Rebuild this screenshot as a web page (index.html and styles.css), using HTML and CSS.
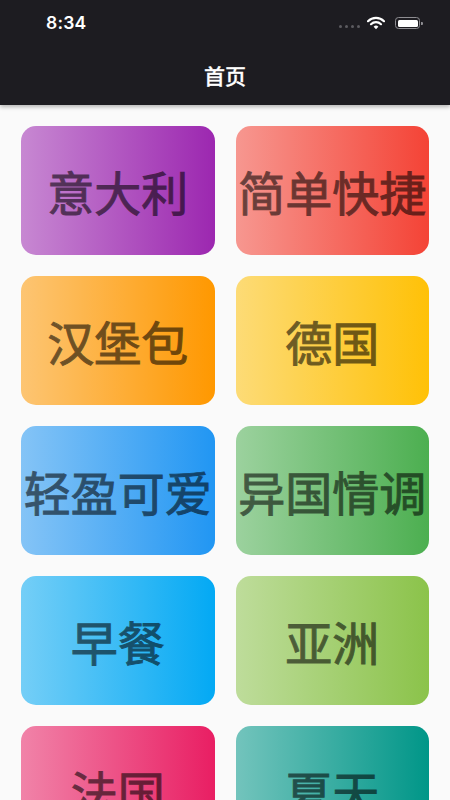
FILE: index.html
```html
<!DOCTYPE html>
<html lang="zh-CN">
<head>
<meta charset="utf-8">
<meta name="viewport" content="width=device-width, initial-scale=1">
<title>首页</title>
<link rel="stylesheet" href="styles.css">
</head>
<body>
<div class="screen">
  <header class="appbar">
    <div class="status">
      <span class="status__time">8:34</span>
      <div class="status__icons">
        <span class="signal"><i></i><i></i><i></i><i></i></span>
        <svg class="wifi" width="18" height="14" viewBox="0 0 18 14" aria-hidden="true">
          <path d="M1 5.2 A11.5 11.5 0 0 1 17 5.2" fill="none" stroke="#fff" stroke-width="2.2" stroke-linecap="round"/>
          <path d="M4 8.2 A7.2 7.2 0 0 1 14 8.2" fill="none" stroke="#fff" stroke-width="2.2" stroke-linecap="round"/>
          <path d="M9 13.2 L6.6 10.8 A3.4 3.4 0 0 1 11.4 10.8 Z" fill="#fff"/>
        </svg>
        <span class="battery"><span class="battery__level"></span></span>
      </div>
    </div>
    <div class="toolbar">
      <h1 class="toolbar__title">首页</h1>
    </div>
  </header>
  <main class="grid">
    <div class="card card--purple"><span class="card__title">意大利</span></div>
    <div class="card card--red"><span class="card__title">简单快捷</span></div>
    <div class="card card--orange"><span class="card__title">汉堡包</span></div>
    <div class="card card--amber"><span class="card__title">德国</span></div>
    <div class="card card--blue"><span class="card__title">轻盈可爱</span></div>
    <div class="card card--green"><span class="card__title">异国情调</span></div>
    <div class="card card--lightblue"><span class="card__title">早餐</span></div>
    <div class="card card--lightgreen"><span class="card__title">亚洲</span></div>
    <div class="card card--pink"><span class="card__title">法国</span></div>
    <div class="card card--teal"><span class="card__title">夏天</span></div>
  </main>
</div>
</body>
</html>
```

FILE: styles.css
```css
html, body {
  margin: 0;
  padding: 0;
  background: #fafafa;
}

.screen {
  width: 450px;
  height: 800px;
  overflow: hidden;
  background: #fafafa;
  font-family: "Noto Sans CJK SC", "Noto Sans", sans-serif;
}

.appbar {
  position: relative;
  z-index: 2;
  background: #1d1c21;
  box-shadow: 0 2px 4px rgba(0, 0, 0, 0.28);
  height: 105px;
  display: flex;
  flex-direction: column;
}

.status {
  height: 44px;
  display: flex;
  align-items: center;
  justify-content: space-between;
  padding: 0 30px 0 46px;
  box-sizing: border-box;
}

.status__time {
  font-family: Inter, "Liberation Sans", sans-serif;
  font-weight: 600;
  font-size: 17.5px;
  color: #fff;
  letter-spacing: 0.2px;
}

.status__icons {
  display: flex;
  align-items: center;
  gap: 6px;
  padding-top: 2px;
}

.signal {
  display: flex;
  gap: 3px;
  margin-top: 6px;
  margin-right: 1px;
}

.signal i {
  width: 3px;
  height: 3px;
  border-radius: 50%;
  background: #5c5b60;
  display: block;
}

.wifi {
  display: block;
}

.battery {
  position: relative;
  width: 25px;
  height: 12px;
  box-sizing: border-box;
  border: 1px solid #8e8d92;
  border-radius: 3.5px;
  padding: 1.5px;
  margin-left: 4px;
  display: block;
}

.battery::after {
  content: "";
  position: absolute;
  right: -3.5px;
  top: 3.5px;
  width: 1.5px;
  height: 3.5px;
  border-radius: 0 1px 1px 0;
  background: #8e8d92;
}

.battery__level {
  display: block;
  width: 100%;
  height: 100%;
  background: #fff;
  border-radius: 1.5px;
}

.toolbar {
  flex: 1;
  display: flex;
  align-items: center;
  justify-content: center;
}

.toolbar__title {
  margin: 0;
  color: #fff;
  font-size: 21px;
  font-weight: 500;
  line-height: 1;
  padding-top: 2px;
  -webkit-text-stroke: 0.3px #fff;
}

.grid {
  display: grid;
  grid-template-columns: 1fr 1fr;
  gap: 21px;
  padding: 21px;
}

.card {
  aspect-ratio: 3 / 2;
  border-radius: 15px;
  display: flex;
  align-items: center;
  justify-content: center;
  overflow: visible;
  background: linear-gradient(90deg, rgba(var(--c), 0.54), rgb(var(--c)));
}

.card__title {
  font-size: 47px;
  font-weight: 400;
  line-height: 1;
  color: #000;
  -webkit-text-stroke: 1px #000;
  opacity: 0.56;
  white-space: nowrap;
}

.card--purple { --c: 156, 39, 176; }
.card--red { --c: 244, 67, 54; }
.card--orange { --c: 255, 152, 0; }
.card--amber { --c: 255, 193, 7; }
.card--blue { --c: 33, 150, 243; }
.card--green { --c: 76, 175, 80; }
.card--lightblue { --c: 3, 169, 244; }
.card--lightgreen { --c: 139, 195, 74; }
.card--pink { --c: 233, 30, 99; }
.card--teal { --c: 0, 150, 136; }
```
